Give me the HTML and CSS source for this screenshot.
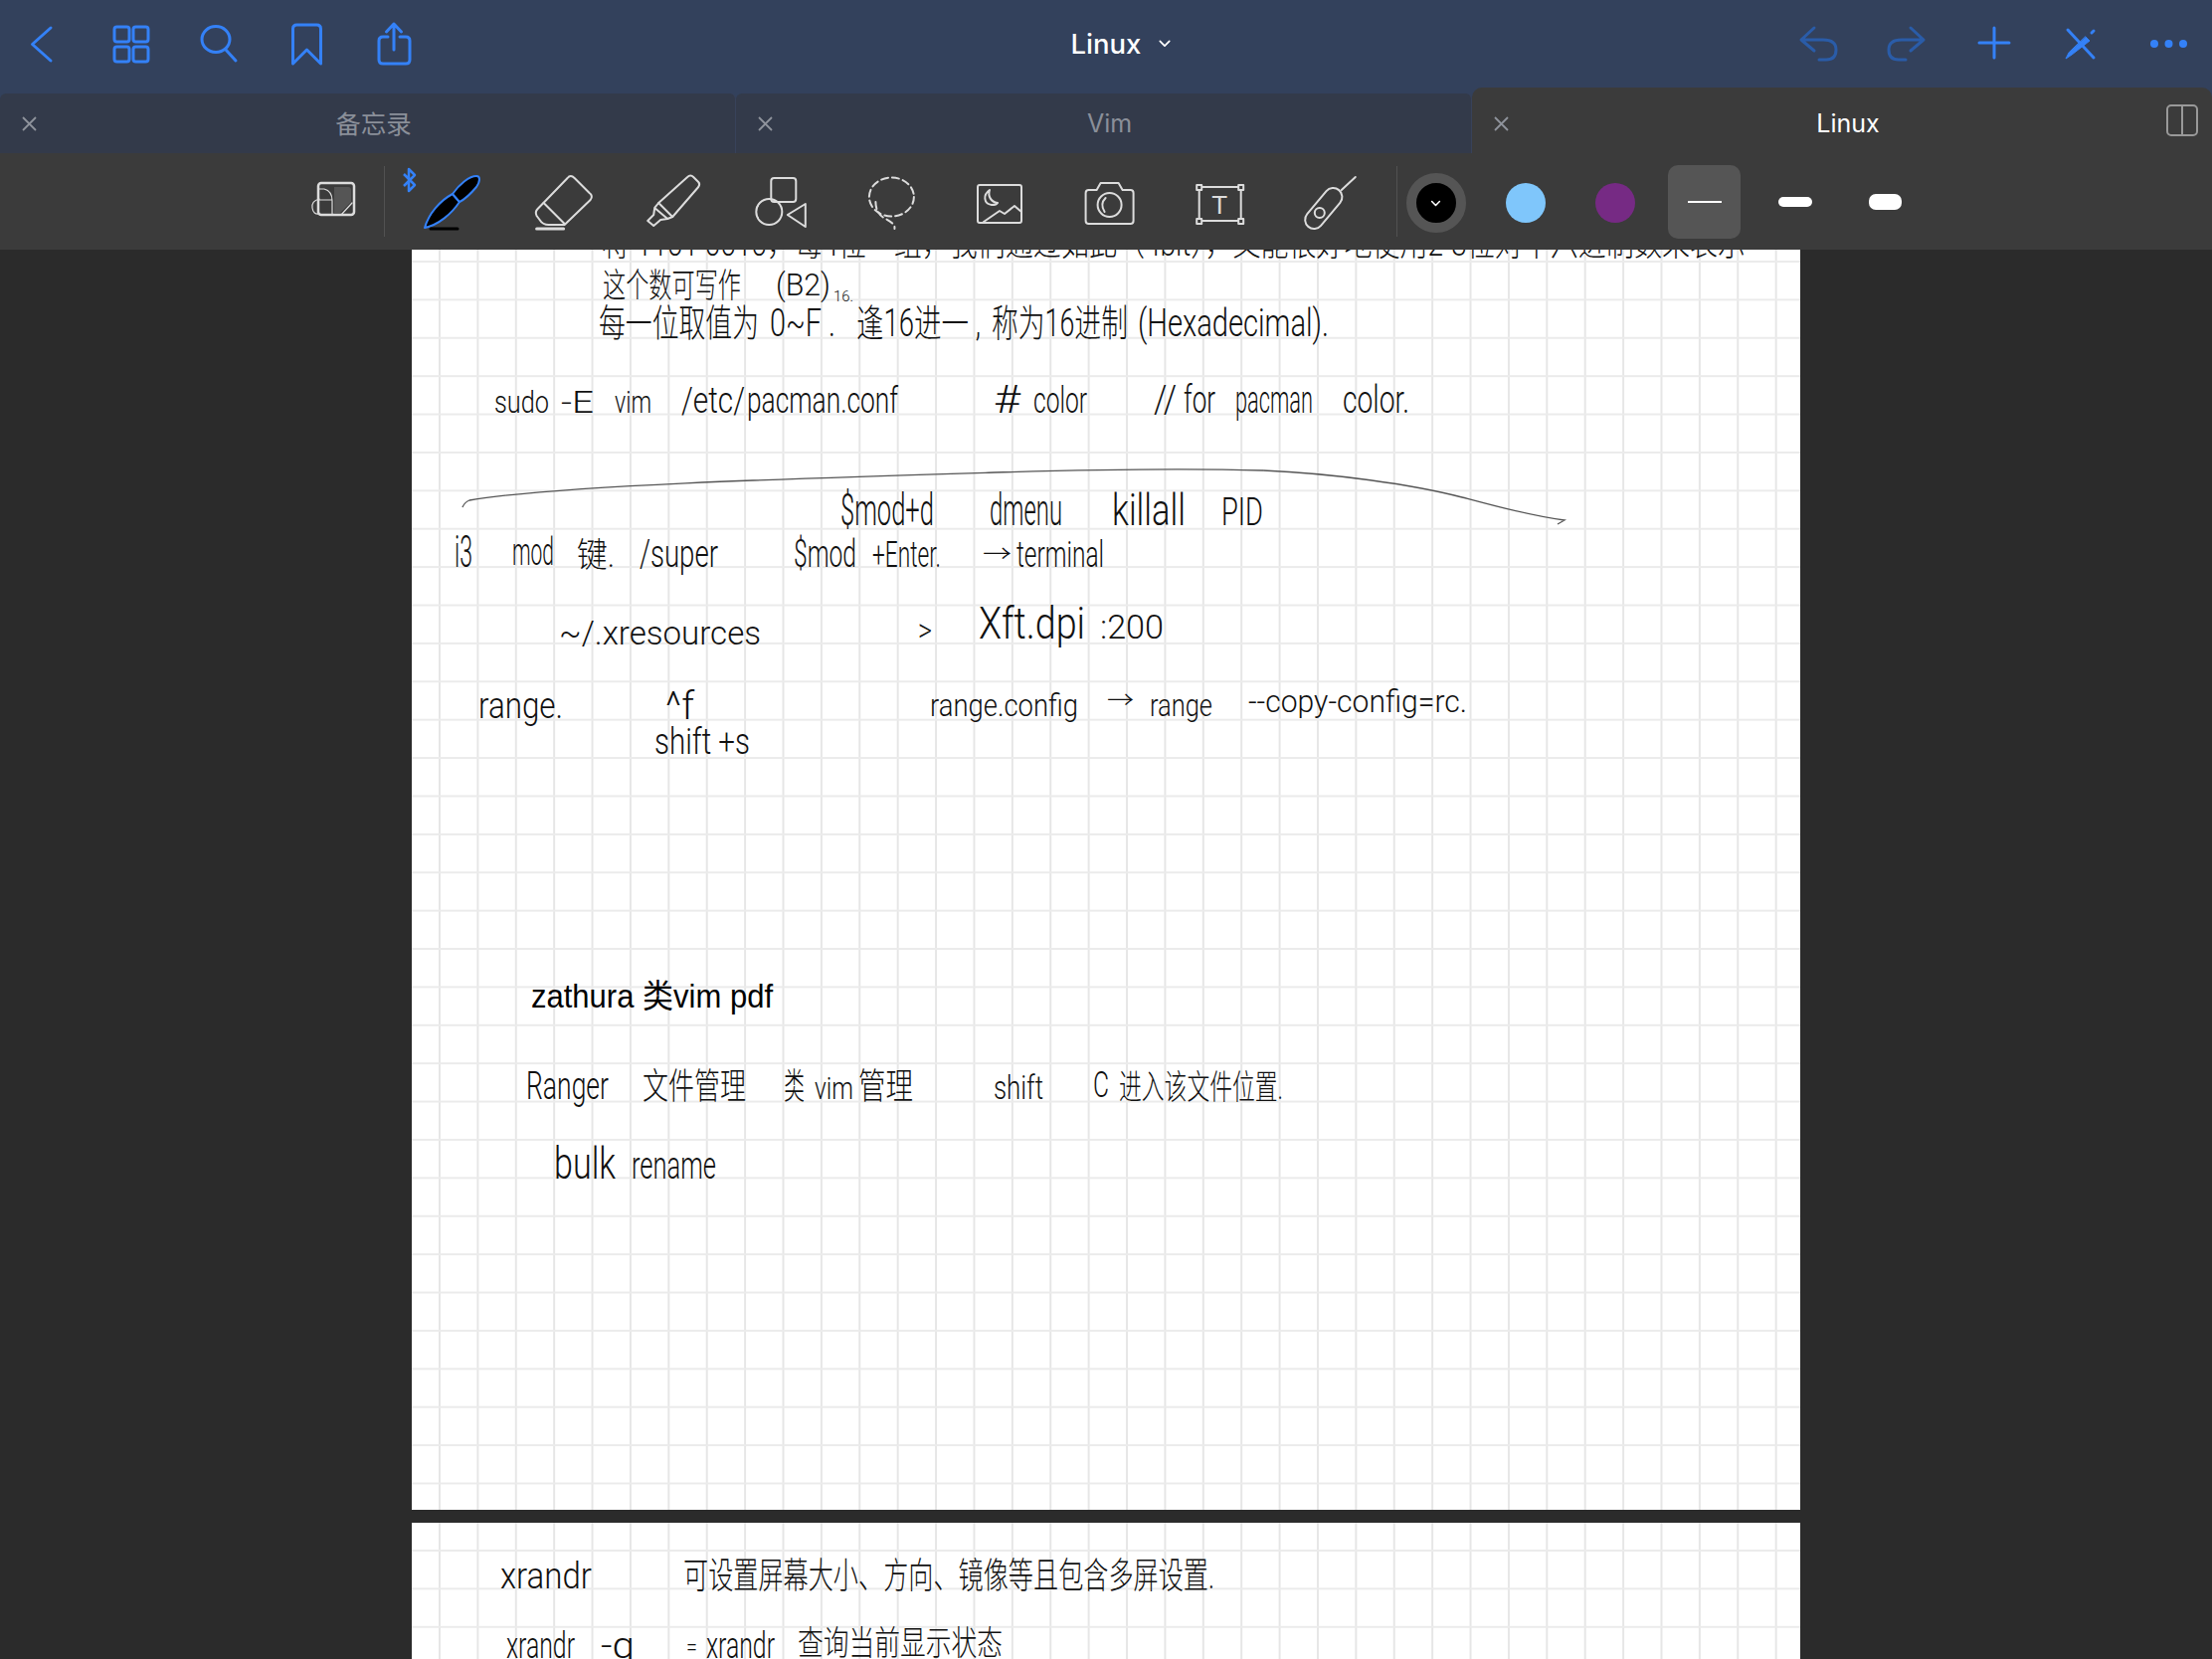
FILE: index.html
```html
<!DOCTYPE html>
<html lang="zh">
<head>
<meta charset="utf-8">
<title>Linux</title>
<link rel="stylesheet" href="styles.css">
</head>
<body>
<header class="chrome">
  <nav class="nav">
    <div class="nav-group">
      <svg class="slot-nav ic-blue" viewBox="0 0 88 88"><path d="M51 28 32.500 44.500 51 61"/></svg>
      <svg class="slot-nav ic-blue" viewBox="88 0 88 88"><rect x="115" y="27" width="15" height="15" rx="2.500"/><rect x="134" y="27" width="15" height="15" rx="2.500"/><rect x="115" y="47" width="15" height="15" rx="2.500"/><rect x="134" y="47" width="15" height="15" rx="2.500"/></svg>
      <svg class="slot-nav ic-blue" viewBox="176 0 88 88"><ellipse cx="217" cy="39.500" rx="14" ry="13"/><path d="M227 50 237 61"/></svg>
      <svg class="slot-nav ic-blue" viewBox="264 0 88 88"><path d="M294.500 64V29q0-4 4-4h20q4 0 4 4V64L308.500 50Z"/></svg>
      <svg class="slot-nav ic-blue" viewBox="352 0 88 88"><path d="M390 37H385q-4 0-4 4V60q0 4 4 4H408q4 0 4-4V41q0-4-4-4H402M396 50V24M388.500 32 396 24 403.500 32"/></svg>
    </div>
    <div class="nav-title"><span>Linux</span>
      <svg class="chev" viewBox="0 0 14 9"><path d="M1.500 1.500 7 7 12.500 1.500"/></svg>
    </div>
    <div class="nav-group">
      <svg class="slot-nav ic-dim" viewBox="1784 0 88 88"><path d="M1824 28 1811 40 1824 51M1811 40H1833Q1846 40 1846 50T1836 60H1829"/></svg>
      <svg class="slot-nav ic-dim" viewBox="1872 0 88 88"><path d="M1921 28 1934 40 1921 51M1934 40H1912Q1899 40 1899 50T1909 60H1916"/></svg>
      <svg class="slot-nav ic-blue" viewBox="1960 0 88 88"><path d="M1990 43H2020M2005 28V58"/></svg>
      <svg class="slot-nav ic-blue" viewBox="2048 0 88 88"><path d="M2079 30 2105 58"/><path class="fill-blue" d="M2097 37 2101 41 2083 55 2077 59 2080 53Z"/><path d="M2103 33 2105 31"/></svg>
      <svg class="slot-nav dots" viewBox="2136 0 88 88"><circle cx="2166" cy="44" r="4"/><circle cx="2180.500" cy="44" r="4"/><circle cx="2195" cy="44" r="4"/></svg>
    </div>
  </nav>
  <div class="tabs">
    <div class="tab">
      <svg class="tab-x" viewBox="0 0 15 15"><path d="M1 1 14 14M14 1 1 14"/></svg>
      <span class="tab-title tab-title-cjk">备忘录</span>
    </div>
    <div class="tab">
      <svg class="tab-x" viewBox="0 0 15 15"><path d="M1 1 14 14M14 1 1 14"/></svg>
      <span class="tab-title">Vim</span>
    </div>
    <div class="tab tab-active">
      <svg class="tab-x" viewBox="0 0 15 15"><path d="M1 1 14 14M14 1 1 14"/></svg>
      <span class="tab-title">Linux</span>
      <svg class="split" viewBox="2178 105 32 32"><rect x="2179" y="106" width="30" height="30" rx="4"/><path d="M2194 106V136"/></svg>
    </div>
  </div>
  <div class="toolbar">
    <svg class="slot-pages ic-tool" viewBox="290 154 96 97">
      <path class="fill-grey" d="M336 188H350Q353 188 353 191V203L342 214H336Z"/>
      <rect class="ic-heavy" x="320" y="184" width="36" height="32" rx="3"/>
      <path class="ic-hair" d="M321 190H326Q334 192 334 202V216M321 201H334M321 200Q313 202 314 209T321 215"/>
      <path class="ic-hair" d="M343 216 354 204"/>
    </svg>
    <span class="sep"></span>
    <svg class="slot-tool" viewBox="398 154 110.400 97">
      <path class="ic-bt" d="M406 175 417 186 411 192V170L417 176 406 187"/>
      <path class="pen-body" d="M427 229C431 215 442 202 455 195L462 203C454 215 441 226 427 229Z"/>
      <path class="pen-body" d="M455 195C462 185 472 177 479 177 483 177 483 182 479 188 474 194 468 200 462 203Z"/>
      <path class="pen-ink" d="M433 230H460"/>
    </svg>
    <svg class="slot-tool ic-tool" viewBox="508.400 154 110.400 97">
      <path d="M571 179Q574 175 578 179L593 194Q597 197 594 201L568 226H552Q546 226 543 221L540 217Q538 213 541 210Z"/>
      <path d="M547 204 568 225"/>
      <path class="ic-base" d="M540 230H567"/>
    </svg>
    <svg class="slot-tool ic-tool" viewBox="618.800 154 110.400 97">
      <path d="M691 178Q694 175 697 178L702 183Q704 185 702 188L676 218 662 204Z"/>
      <path d="M662 204 658 209 671 220 676 218M658 209 657 216 651 222 657 227 664 221 671 220"/>
    </svg>
    <svg class="slot-tool ic-tool" viewBox="729.200 154 110.400 97">
      <rect x="775.500" y="179" width="25" height="24" rx="3"/>
      <circle cx="773.500" cy="213" r="13"/>
      <path d="M810 205 792 216 810 228Z"/>
    </svg>
    <svg class="slot-tool ic-tool ic-dash" viewBox="839.600 154 110.400 97">
      <ellipse cx="896" cy="198" rx="22.500" ry="19.500"/>
      <path d="M880 203Q880 215 890 220T899 230"/>
    </svg>
    <svg class="slot-tool ic-tool" viewBox="950 154 110.400 97">
      <rect x="983" y="186" width="44" height="38" rx="2"/>
      <path d="M989 223 1005 212 1010 215 1020 207 1027 213"/>
      <path d="M995 191C988 196 989 205 997 206 1002 206 1003 204 1003 204 996 203 993 197 995 191Z"/>
    </svg>
    <svg class="slot-tool ic-tool" viewBox="1060.400 154 110.400 97">
      <path d="M1095 191H1103L1107 184H1125L1129 191H1137Q1140 191 1140 194V222Q1140 225 1137 225H1095Q1092 225 1092 222V194Q1092 191 1095 191Z"/>
      <circle cx="1116" cy="206" r="12"/>
      <path d="M1112 199Q1106 205 1111 213"/>
    </svg>
    <svg class="slot-tool ic-tool" viewBox="1170.800 154 110.400 97">
      <rect x="1205.500" y="188" width="42" height="34"/>
      <rect class="fill-bar" x="1203" y="186" width="5" height="5"/>
      <rect class="fill-bar" x="1245" y="186" width="5" height="5"/>
      <rect class="fill-bar" x="1203" y="220" width="5" height="5"/>
      <rect class="fill-bar" x="1245" y="220" width="5" height="5"/>
      <text class="tool-t" x="1226" y="215" text-anchor="middle">T</text>
    </svg>
    <svg class="slot-tool ic-tool" viewBox="1281.200 154 110.400 97">
      <rect x="-9" y="-24" width="18" height="48" rx="9" transform="translate(1331 209.500) rotate(40)"/>
      <circle cx="1327" cy="214" r="5"/>
      <path d="M1349 191 1363 178"/>
    </svg>
    <span class="sep sep-tight"></span>
    <div class="swatch-slot"><span class="ring"><svg class="ring-chev" viewBox="0 0 14 9"><path d="M2 2 7 7 12 2"/></svg></span></div>
    <div class="swatch-slot"><span class="dot dot-sky"></span></div>
    <div class="swatch-slot"><span class="dot dot-purple"></span></div>
    <div class="swatch-slot"><span class="weight-on"><span class="bar bar-thin"></span></span></div>
    <div class="swatch-slot"><span class="bar bar-mid"></span></div>
    <div class="swatch-slot"><span class="bar bar-fat"></span></div>
  </div>
</header>
<main class="doc">
  <section class="page page-one">
    <svg class="ink" viewBox="414 251 1396 1267">
      <text class="hw s34" x="605" y="257" textLength="1150" lengthAdjust="spacingAndGlyphs">将 1101 0010，每4位一组，我们通过如此（4bit），又能很好地使用2-3位对十六进制数来表示</text>
      <text class="hw s34" x="606" y="299" textLength="139" lengthAdjust="spacingAndGlyphs">这个数可写作</text>
      <text class="hw s32" x="780" y="297" textLength="55" lengthAdjust="spacingAndGlyphs">(B2)</text>
      <text class="hw s14" x="838" y="303" textLength="20" lengthAdjust="spacingAndGlyphs">16.</text>
      <text class="hw s38" x="602" y="338" textLength="161" lengthAdjust="spacingAndGlyphs">每一位取值为</text>
      <text class="hw s38" x="774" y="338" textLength="66" lengthAdjust="spacingAndGlyphs">0~F .</text>
      <text class="hw s38" x="861" y="338" textLength="125" lengthAdjust="spacingAndGlyphs">逢16进一 ,</text>
      <text class="hw s38" x="997" y="338" textLength="137" lengthAdjust="spacingAndGlyphs">称为16进制</text>
      <text class="hw s38" x="1144" y="338" textLength="192" lengthAdjust="spacingAndGlyphs">(Hexadecimal).</text>

      <text class="hw s32" x="497" y="415" textLength="55" lengthAdjust="spacingAndGlyphs">sudo</text>
      <text class="hw s32" x="564" y="415" textLength="33" lengthAdjust="spacingAndGlyphs">-E</text>
      <text class="hw s32" x="618" y="415" textLength="37" lengthAdjust="spacingAndGlyphs">vim</text>
      <text class="hw s36" x="685" y="415" textLength="64" lengthAdjust="spacingAndGlyphs">/etc/</text>
      <text class="hw s36" x="751" y="415" textLength="152" lengthAdjust="spacingAndGlyphs">pacman.conf</text>
      <text class="hw s38" x="999" y="415" textLength="27" lengthAdjust="spacingAndGlyphs">#</text>
      <text class="hw s36" x="1039" y="415" textLength="54" lengthAdjust="spacingAndGlyphs">color</text>
      <text class="hw s38" x="1160" y="415" textLength="23" lengthAdjust="spacingAndGlyphs">//</text>
      <text class="hw s38" x="1190" y="415" textLength="32" lengthAdjust="spacingAndGlyphs">for</text>
      <text class="hw s38" x="1242" y="415" textLength="78" lengthAdjust="spacingAndGlyphs">pacman</text>
      <text class="hw s38" x="1350" y="415" textLength="67" lengthAdjust="spacingAndGlyphs">color.</text>

      <path class="curve" d="M465 510Q467 505 472 503C560 488 800 481 1000 475 1100 472 1200 471 1270 473 1340 476 1420 487 1470 500 1500 508 1540 519 1573 523L1566 527"/>

      <text class="hw s44" x="845" y="528" textLength="94" lengthAdjust="spacingAndGlyphs">$mod+d</text>
      <text class="hw s44" x="995" y="528" textLength="73" lengthAdjust="spacingAndGlyphs">dmenu</text>
      <text class="hw s44" x="1118" y="528" textLength="74" lengthAdjust="spacingAndGlyphs">killall</text>
      <text class="hw s38" x="1228" y="528" textLength="42" lengthAdjust="spacingAndGlyphs">PID</text>

      <text class="hw s44" x="457" y="570" textLength="18" lengthAdjust="spacingAndGlyphs">i3</text>
      <text class="hw s38" x="515" y="568" textLength="42" lengthAdjust="spacingAndGlyphs">mod</text>
      <text class="hw s34" x="580" y="570" textLength="38" lengthAdjust="spacingAndGlyphs">键.</text>
      <text class="hw s38" x="643" y="570" textLength="79" lengthAdjust="spacingAndGlyphs">/super</text>
      <text class="hw s38" x="798" y="570" textLength="63" lengthAdjust="spacingAndGlyphs">$mod</text>
      <text class="hw s36" x="877" y="570" textLength="69" lengthAdjust="spacingAndGlyphs">+Enter.</text>
      <text class="hw s24" x="988" y="565" textLength="29" lengthAdjust="spacingAndGlyphs">→</text>
      <text class="hw s36" x="1022" y="570" textLength="88" lengthAdjust="spacingAndGlyphs">terminal</text>

      <text class="hw s34" x="562" y="648" textLength="203" lengthAdjust="spacingAndGlyphs">~/.xresources</text>
      <text class="hw s34" x="923" y="645" textLength="14" lengthAdjust="spacingAndGlyphs">&gt;</text>
      <text class="hw s44" x="984" y="642" textLength="107" lengthAdjust="spacingAndGlyphs">Xft.dpi</text>
      <text class="hw s34" x="1106" y="642" textLength="64" lengthAdjust="spacingAndGlyphs">:200</text>

      <text class="hw s36" x="481" y="722" textLength="85" lengthAdjust="spacingAndGlyphs">range.</text>
      <text class="hw s38" x="669" y="723" textLength="29" lengthAdjust="spacingAndGlyphs">^f</text>
      <text class="hw s36" x="658" y="758" textLength="96" lengthAdjust="spacingAndGlyphs">shift +s</text>
      <text class="hw s32" x="935" y="720" textLength="149" lengthAdjust="spacingAndGlyphs">range.config</text>
      <text class="hw s24" x="1113" y="712" textLength="27" lengthAdjust="spacingAndGlyphs">→</text>
      <text class="hw s32" x="1156" y="720" textLength="63" lengthAdjust="spacingAndGlyphs">range</text>
      <text class="hw s32" x="1255" y="716" textLength="220" lengthAdjust="spacingAndGlyphs">--copy-config=rc.</text>

      <text class="typed" x="534" y="1013" textLength="243" lengthAdjust="spacingAndGlyphs">zathura 类vim pdf</text>

      <text class="hw s38" x="529" y="1105" textLength="83" lengthAdjust="spacingAndGlyphs">Ranger</text>
      <text class="hw s36" x="646" y="1105" textLength="104" lengthAdjust="spacingAndGlyphs">文件管理</text>
      <text class="hw s36" x="788" y="1105" textLength="21" lengthAdjust="spacingAndGlyphs">类</text>
      <text class="hw s32" x="819" y="1105" textLength="39" lengthAdjust="spacingAndGlyphs">vim</text>
      <text class="hw s36" x="863" y="1105" textLength="55" lengthAdjust="spacingAndGlyphs">管理</text>
      <text class="hw s34" x="999" y="1105" textLength="50" lengthAdjust="spacingAndGlyphs">shift</text>
      <text class="hw s36" x="1099" y="1103" textLength="16" lengthAdjust="spacingAndGlyphs">C</text>
      <text class="hw s34" x="1125" y="1105" textLength="165" lengthAdjust="spacingAndGlyphs">进入该文件位置.</text>

      <text class="hw s44" x="557" y="1185" textLength="62" lengthAdjust="spacingAndGlyphs">bulk</text>
      <text class="hw s38" x="635" y="1185" textLength="85" lengthAdjust="spacingAndGlyphs">rename</text>
    </svg>
  </section>
  <section class="page page-two">
    <svg class="ink" viewBox="414 1531 1396 137">
      <text class="hw s36" x="503" y="1597" textLength="92" lengthAdjust="spacingAndGlyphs">xrandr</text>
      <text class="hw s36" x="687" y="1597" textLength="534" lengthAdjust="spacingAndGlyphs">可设置屏幕大小、方向、镜像等且包含多屏设置.</text>
      <text class="hw s36" x="509" y="1667" textLength="69" lengthAdjust="spacingAndGlyphs">xrandr</text>
      <text class="hw s36" x="604" y="1667" textLength="34" lengthAdjust="spacingAndGlyphs">-q</text>
      <text class="hw s24" x="690" y="1664" textLength="11" lengthAdjust="spacingAndGlyphs">=</text>
      <text class="hw s36" x="710" y="1667" textLength="69" lengthAdjust="spacingAndGlyphs">xrandr</text>
      <text class="hw s34" x="802" y="1664" textLength="206" lengthAdjust="spacingAndGlyphs">查询当前显示状态</text>
    </svg>
  </section>
</main>
</body>
</html>
```
FILE: styles.css
```css
* { box-sizing: border-box; }
html, body { margin: 0; padding: 0; }
body {
  width: 2224px;
  height: 1668px;
  overflow: hidden;
  background: #2b2b2b;
  font-family: Inter, "Noto Sans CJK SC", sans-serif;
}
svg { display: block; fill: none; }

.chrome { background: #33415c; }

.nav {
  height: 88px;
  display: grid;
  grid-template-columns: 440px 1fr 440px;
  align-items: center;
}
.nav-group { display: flex; }
.slot-nav { width: 88px; height: 88px; }
.ic-blue { stroke: #3481f7; stroke-width: 3; stroke-linecap: round; stroke-linejoin: round; }
.ic-dim { stroke: #2a5ca8; stroke-width: 3; stroke-linecap: round; stroke-linejoin: round; }
.fill-blue { fill: #3481f7; stroke: #3481f7; stroke-width: 1; }
.dots { fill: #3481f7; }

.nav-title {
  display: flex;
  justify-content: center;
  align-items: center;
  gap: 18px;
  padding-left: 30px;
  color: #fff;
  font-size: 27.500px;
  font-weight: 500;
}
.chev { width: 12px; height: 8px; stroke: #fff; stroke-width: 2; stroke-linecap: round; stroke-linejoin: round; }

.tabs { display: flex; align-items: flex-end; height: 66px; }
.tab {
  position: relative;
  width: 740px;
  height: 60px;
  display: flex;
  align-items: center;
  padding: 0 25px 0 22px;
  background: #333a4a;
  border-radius: 6px 6px 0 0;
  border-right: 1px solid #38425a;
  color: #8a8f99;
  font-size: 25px;
}
.tab-active {
  width: 744px;
  height: 66px;
  padding-top: 6px;
  padding-left: 22px;
  background: #3b3b3b;
  border-right: 0;
  border-radius: 10px 10px 0 0;
  color: #fff;
}
.tab-x { width: 15px; height: 15px; stroke: #8f939c; stroke-width: 1.800; }
.tab-title { flex: 1; text-align: center; }
.tab-title-cjk { margin-top: -3px; font-size: 25.500px; }
.split {
  position: absolute;
  top: 17px;
  right: 14px;
  width: 32px;
  height: 32px;
  stroke: #999;
  stroke-width: 2;
}

.toolbar {
  display: flex;
  align-items: center;
  height: 97px;
  padding-left: 290px;
  background: #3b3b3b;
}
.slot-pages { width: 96px; height: 97px; flex: none; }
.slot-tool { width: 110.400px; height: 97px; flex: none; }
.sep { width: 1px; height: 71px; margin-right: 11px; background: #525252; flex: none; }
.sep-tight { margin-left: 12.400px; margin-right: -6px; }
.ic-tool { stroke: #dcdcdc; stroke-width: 2; stroke-linecap: round; stroke-linejoin: round; }
.ic-dash { stroke-dasharray: 7 4; }
.ic-base { stroke-width: 3; }
.ic-heavy { stroke-width: 2.500; }
.ic-hair { stroke-width: 1.200; }
.ic-bt { stroke: #3481f7; stroke-width: 2.500; stroke-linejoin: round; }
.pen-body { fill: #000; stroke: #3481f7; stroke-width: 2; stroke-linejoin: round; }
.pen-ink { stroke: #000; stroke-width: 3; stroke-linecap: round; }
.fill-grey { fill: #555; stroke: none; }
.fill-bar { fill: #3b3b3b; }
.tool-t { fill: #dcdcdc; stroke: none; font-family: "Liberation Sans", sans-serif; font-size: 26px; }

.swatch-slot {
  width: 90px;
  height: 97px;
  flex: none;
  display: flex;
  align-items: center;
  justify-content: center;
}
.ring {
  width: 60px;
  height: 60px;
  margin-top: 3px;
  border-radius: 50%;
  background: #000;
  border: 10px solid #555;
  display: flex;
  align-items: center;
  justify-content: center;
}
.ring-chev { width: 11px; height: 7px; stroke: #fff; stroke-width: 2; stroke-linecap: round; stroke-linejoin: round; }
.dot { width: 40px; height: 40px; margin-top: 3px; border-radius: 50%; }
.dot-sky { background: #7fc6fb; }
.dot-purple { background: #762a84; }
.weight-on {
  width: 73px;
  height: 74px;
  border-radius: 10px;
  background: #555;
  display: flex;
  align-items: center;
  justify-content: center;
}
.bar { background: #fff; display: block; }
.bar-thin { width: 34px; height: 2px; }
.bar-mid { width: 34px; height: 10px; border-radius: 5px; margin-left: 2px; }
.bar-fat { width: 33px; height: 16px; border-radius: 7px; margin-left: 3px; }

.doc { padding: 0 414px; }
.page {
  position: relative;
  width: 1396px;
  overflow: hidden;
  background-color: #fff;
  background-image:
    linear-gradient(#ebebeb 0 2px, transparent 2px),
    linear-gradient(90deg, #e6e6e6 0 1.500px, transparent 1.500px);
  background-size: 38.400px 38.400px;
}
.page-one { height: 1267px; margin-bottom: 13px; background-position: 27px 11px; }
.page-two { height: 137px; background-position: 27px 27px; }
.ink { position: absolute; left: 0; top: 0; width: 100%; height: 100%; }

.hw {
  fill: #111;
  font-family: Roboto, "Noto Sans CJK SC", sans-serif;
  font-weight: 300;
}
.s14 { font-size: 14px; }
.s24 { font-size: 24px; }
.s32 { font-size: 32px; }
.s34 { font-size: 34px; }
.s36 { font-size: 36px; }
.s38 { font-size: 38px; }
.s44 { font-size: 44px; }
.typed {
  fill: #000;
  font-family: "Liberation Sans", "Noto Sans CJK SC", sans-serif;
  font-size: 33px;
}
.curve { stroke: #555; stroke-width: 1.300; fill: none; }
```
